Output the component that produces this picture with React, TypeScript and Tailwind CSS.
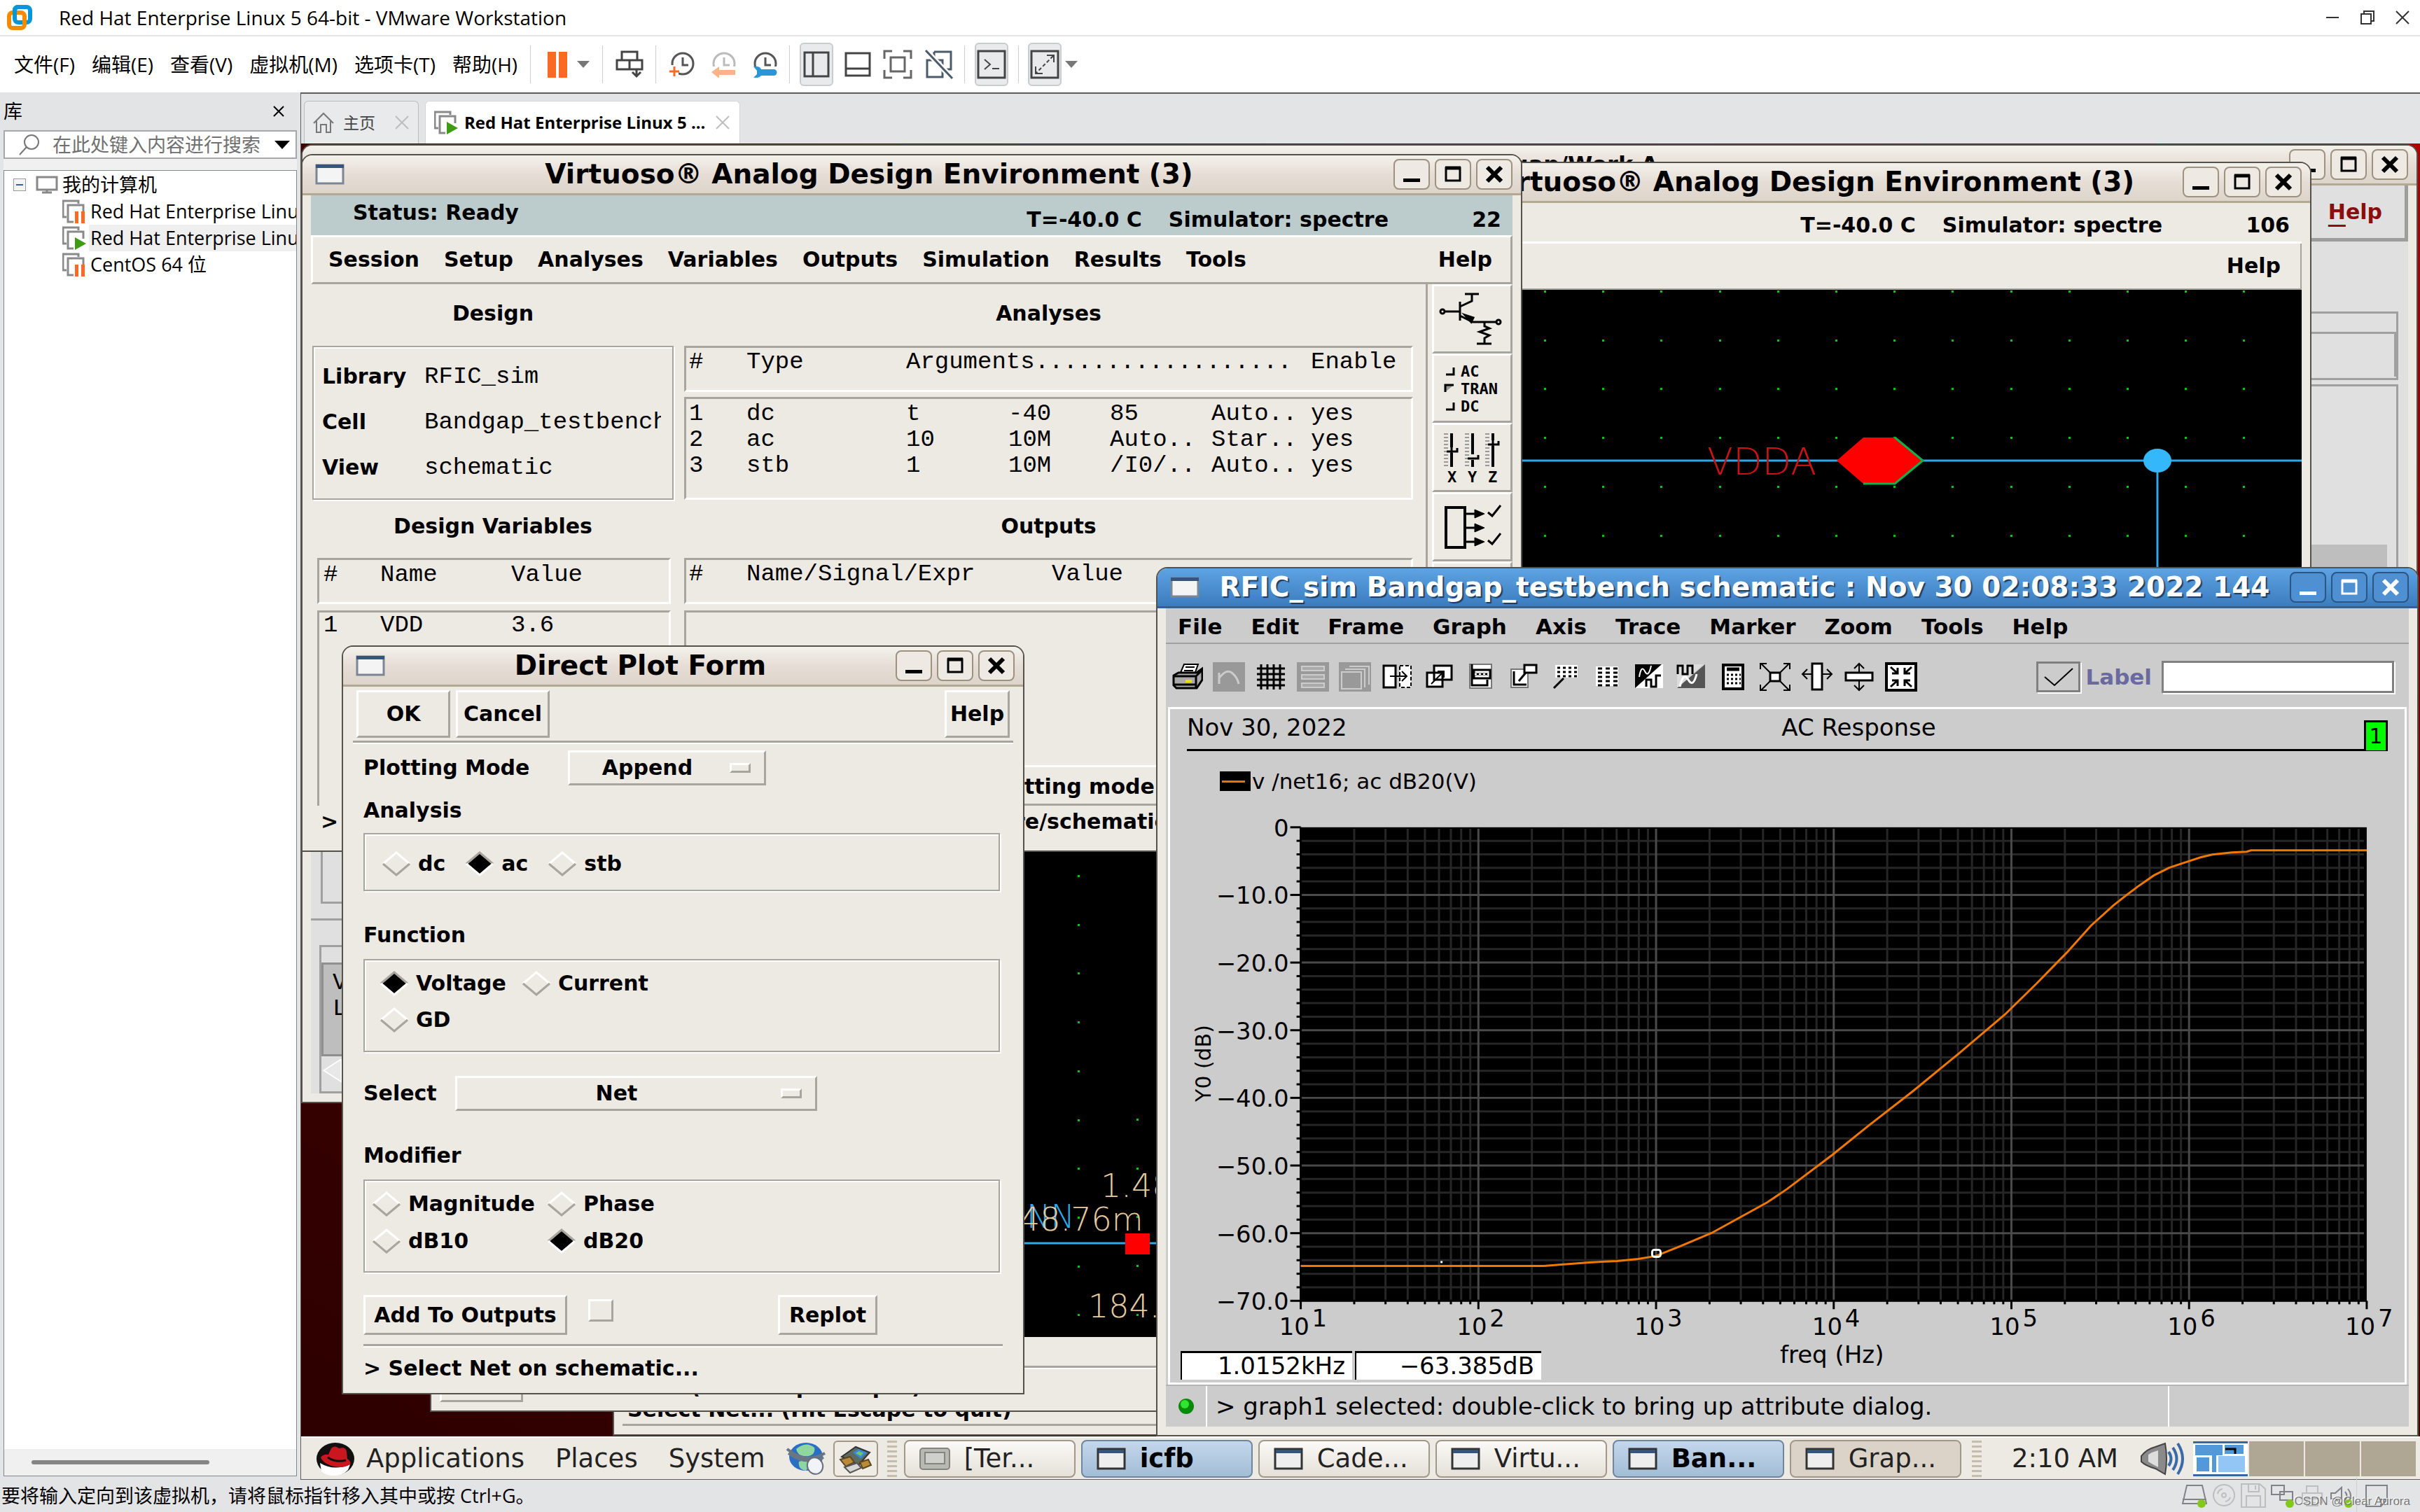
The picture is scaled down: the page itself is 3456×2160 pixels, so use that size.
import type { ReactNode } from "react";
import clsx from "clsx";

const UI = "font-['Open_Sans','Noto_Sans_CJK_SC',sans-serif]";
const BOLD = "font-['DejaVu_Sans',sans-serif] text-[30px] font-bold leading-9 text-black";
const MONO = "font-['Liberation_Mono',monospace] text-[34px] leading-[37px] text-black";
const SANS = "font-['DejaVu_Sans',sans-serif] text-[34px] leading-10 text-black";

const RAISED = "border-[3px] border-t-white border-l-white border-r-[#a8a59f] border-b-[#a8a59f]";
const SUNKEN = "border-[3px] border-t-[#a8a59f] border-l-[#a8a59f] border-r-white border-b-white";
const GROOVE = "border-2 border-[#a8a59f] shadow-[inset_2px_2px_0_#fff,2px_2px_0_#fff]";

/* ---------- VMware shell ---------- */

function VmwareLogo() {
  return (
    <svg width="38" height="38" viewBox="0 0 38 38" fill="none" strokeWidth="6">
      <rect x="12" y="4" width="22" height="22" rx="5" stroke="#0a95d6" />
      <rect x="4" y="12" width="22" height="22" rx="5" stroke="#f38b00" />
      <path d="M12 16V9q0-5 5-5h6" stroke="#0a95d6" />
    </svg>
  );
}

function TitleBar() {
  return (
    <header className="flex h-[52px] shrink-0 items-center border-b-2 border-[#e4e4e4] bg-white pl-[9px]">
      <VmwareLogo />
      <h1 className="ml-[37px] flex-1 text-[28px] text-black">Red Hat Enterprise Linux 5 64-bit - VMware Workstation</h1>
      <div className="flex gap-[28px] pr-[14px]">
        <button aria-label="最小化">
          <svg width="22" height="22" viewBox="0 0 22 22" stroke="#333" strokeWidth="2"><path d="M2 11h18" /></svg>
        </button>
        <button aria-label="还原">
          <svg width="22" height="22" viewBox="0 0 22 22" fill="none" stroke="#333" strokeWidth="2">
            <path d="M6 6V2h14v14h-4M2 6h14v14H2z" />
          </svg>
        </button>
        <button aria-label="关闭">
          <svg width="22" height="22" viewBox="0 0 22 22" stroke="#333" strokeWidth="2"><path d="M2 2l18 18M20 2L2 20" /></svg>
        </button>
      </div>
    </header>
  );
}

function Clock({ color, children }: { color: string; children: ReactNode }) {
  return (
    <svg width="38" height="38" viewBox="0 0 38 38" fill="none">
      <circle cx="20" cy="18" r="15" stroke={color} strokeWidth="3" />
      <path d="M20 9v11h8" stroke={color} strokeWidth="3" />
      {children}
    </svg>
  );
}

const Sep = ({ className }: { className?: string }) => <span className={clsx("h-[54px] w-px bg-[#cfcfcf]", className)} />;

const Caret = ({ className }: { className?: string }) => (
  <svg width="18" height="10" viewBox="0 0 18 10" className={className} fill="#777"><path d="M0 0h18L9 10z" /></svg>
);

const vmMenus = ["文件(F)", "编辑(E)", "查看(V)", "虚拟机(M)", "选项卡(T)", "帮助(H)"];

const pressed = "flex h-[62px] w-[48px] items-center justify-center rounded-md border-2 border-[#c9cbcc] bg-[#e9eaeb]";

function MenuBar() {
  return (
    <div className="flex h-[80px] shrink-0 items-center bg-white pl-[20px]">
      <nav className="flex gap-[24px] text-[28px] text-black">
        {vmMenus.map((m) => (
          <button key={m}>{m}</button>
        ))}
      </nav>
      <Sep className="ml-[18px]" />
      <button aria-label="挂起" className="ml-[24px] flex gap-1">
        <i className="h-[37px] w-[12px] bg-[#fb6a22]" />
        <i className="h-[37px] w-[12px] bg-[#fb6a22]" />
      </button>
      <Caret className="ml-[14px]" />
      <Sep className="ml-[18px]" />
      <button aria-label="发送 Ctrl+Alt+Del" className="ml-[18px]">
        <svg width="40" height="40" viewBox="0 0 40 40" fill="none" stroke="#444" strokeWidth="3">
          <path d="M9 13V2h22v11M2 14h36v13H2zM20 14v13M30 27v9M24 31l6 6 6-6" />
        </svg>
      </button>
      <Sep className="ml-[17px]" />
      <div className="ml-[18px] flex gap-[21px]">
        <button aria-label="拍摄快照">
          <Clock color="#555"><path d="M0 20h14v16H0z" fill="#fff" /><path d="M8 22v14M1 29h14" stroke="#fb6a22" strokeWidth="3" /></Clock>
        </button>
        <button aria-label="恢复快照">
          <Clock color="#bbb"><path d="M0 22h38v16H0z" fill="#fff" /><path d="M2 30l11-8v5h23v7H13v5z" fill="#fcb28a" /></Clock>
        </button>
        <button aria-label="管理快照">
          <Clock color="#555">
            <path d="M0 22h38v16H0z" fill="#fff" />
            <path d="M3 22q9-1 11 4h18a4 4 0 0 1 0 9H14q-3 4-11 3l5-5v-5z" fill="#2b95d8" />
          </Clock>
        </button>
      </div>
      <Sep className="ml-[16px]" />
      <button aria-label="显示库" className={clsx(pressed, "ml-[14px]")}>
        <svg width="38" height="38" viewBox="0 0 38 38" fill="none" stroke="#444" strokeWidth="3"><path d="M2 2h34v34H2zM14 2v34" /></svg>
      </button>
      <div className="ml-[16px] flex items-center gap-[17px]">
        <button aria-label="缩略图栏">
          <svg width="38" height="38" viewBox="0 0 38 38" fill="none" stroke="#444" strokeWidth="3"><path d="M2 3h34v32H2zM2 25h34" /></svg>
        </button>
        <button aria-label="全屏">
          <svg width="42" height="42" viewBox="0 0 42 42" fill="none" stroke="#666" strokeWidth="3">
            <path d="M2 13V2h11M29 2h11v11M40 29v11H29M13 40H2V29M11 11h20v20H11z" />
          </svg>
        </button>
        <button aria-label="Unity">
          <svg width="42" height="42" viewBox="0 0 42 42" fill="none" stroke="#4a5b6b" strokeWidth="3">
            <path d="M14 3h24v25h-7M14 3v10M4 15h22v24H4z" />
            <path d="M2 1l38 40" stroke="#fff" strokeWidth="8" />
            <path d="M2 1l38 40" />
          </svg>
        </button>
      </div>
      <Sep className="ml-[15px]" />
      <button aria-label="控制台" className={clsx(pressed, "ml-[14px]")}>
        <svg width="42" height="42" viewBox="0 0 42 42" fill="none" stroke="#444" strokeWidth="3"><path d="M2 2h38v38H2z" /><path d="M11 14l8 7-8 7M22 27h10" strokeWidth="2" /></svg>
      </button>
      <Sep className="ml-[14px]" />
      <button aria-label="拉伸" className={clsx(pressed, "ml-[13px]")}>
        <svg width="42" height="42" viewBox="0 0 42 42" fill="none" stroke="#444" strokeWidth="3">
          <path d="M2 2h38v38H2z" />
          <path d="M24 8h10v10M8 24v10h10" strokeWidth="2" />
          <path d="M33 9L9 33" strokeWidth="2" strokeDasharray="5 3" />
        </svg>
      </button>
      <Caret className="ml-[5px]" />
    </div>
  );
}

function VmIcon({ state }: { state: "paused" | "running" }) {
  return (
    <svg width="34" height="34" viewBox="0 0 34 34" fill="none" className="shrink-0">
      <path d="M6 25H1V2h22v4" stroke="#8a8a8a" strokeWidth="3" />
      <path d="M16 32H8V8h22v10" stroke="#8a8a8a" strokeWidth="3" />
      {state === "paused" ? (
        <path d="M18 17h5v17h-5zM27 17h5v17h-5z" fill="#fb6a22" />
      ) : (
        <path d="M18 16l16 9-16 9z" fill="#3f9c12" />
      )}
    </svg>
  );
}

const machines = [
  { name: "Red Hat Enterprise Linux 5 64-bit", state: "paused" as const, selected: false },
  { name: "Red Hat Enterprise Linux 5 64-bit", state: "running" as const, selected: true },
  { name: "CentOS 64 位", state: "paused" as const, selected: false },
];

function Library() {
  return (
    <aside className="flex w-[429px] shrink-0 flex-col pr-[5px] pb-[5px] pl-[5px] text-[27px] text-black">
      <div className="flex h-[54px] items-center justify-between pr-[18px]">
        <h2>库</h2>
        <button aria-label="关闭库">
          <svg width="16" height="16" viewBox="0 0 16 16" stroke="#000" strokeWidth="2"><path d="M1 1l14 14M15 1L1 15" /></svg>
        </button>
      </div>
      <div className="flex h-[41px] items-center border-2 border-[#a5a7aa] bg-white pr-[8px] pl-[20px]">
        <svg width="30" height="30" viewBox="0 0 30 30" fill="none" stroke="#777" strokeWidth="2"><circle cx="18" cy="11" r="10" /><path d="M11 18L1 29" /></svg>
        <input
          aria-label="搜索"
          placeholder="在此处键入内容进行搜索"
          className="ml-[18px] min-w-0 flex-1 leading-9 outline-none placeholder:text-[#707070]"
        />
        <svg width="22" height="12" viewBox="0 0 22 12"><path d="M0 0h22L11 12z" /></svg>
      </div>
      <div className="h-[16px] bg-[#f0f0f0]" />
      <div className="flex flex-1 flex-col border border-[#828790] bg-white">
        <ul className="flex-1 overflow-hidden pt-px whitespace-nowrap">
          <li className="flex h-[38px] items-center pl-[13px]">
            <span className="flex h-[18px] w-[18px] items-center justify-center border border-[#999] bg-[#f4f4f4]"><i className="h-[2px] w-[10px] bg-[#3a5fb0]" /></span>
            <svg width="32" height="26" viewBox="0 0 32 26" className="mr-[6px] ml-[14px]" fill="none" stroke="#888" strokeWidth="3"><path d="M2 2h28v18H2zM16 20v4M9 24h14" /></svg>
            我的计算机
          </li>
          {machines.map((m, i) => (
            <li key={i} className="flex h-[38px] items-center pl-[83px]">
              <VmIcon state={m.state} />
              <span className={clsx("ml-[4px] flex-1 pl-[2px] leading-[38px]", m.selected && "bg-[#efefef]")}>{m.name}</span>
            </li>
          ))}
        </ul>
        <div className="flex h-[38px] items-center bg-[#f0f0f0] pl-[39px]">
          <i className="h-[6px] w-[254px] rounded-sm bg-[#858585]" />
        </div>
      </div>
    </aside>
  );
}

const TabClose = () => (
  <button aria-label="关闭标签">
    <svg width="22" height="22" viewBox="0 0 22 22" stroke="#bdbdbd" strokeWidth="2"><path d="M2 2l18 18M20 2L2 20" /></svg>
  </button>
);

function Tabs() {
  return (
    <div className="flex h-[73px] items-end gap-[9px] border-t-2 border-[#5c5c5c] pl-[4px]">
      <div className="flex h-[61px] w-[164px] items-center rounded-t-md border border-b-0 border-[#b9bbbd] bg-[#e9eaeb] pr-[12px] pl-[12px]">
        <svg width="30" height="30" viewBox="0 0 30 30" fill="none" stroke="#777" strokeWidth="2"><path d="M1 16L15 2l14 14M5 13v16h6V18h8v11h6V13" /></svg>
        <span className="ml-[13px] flex-1 text-[23px] text-[#444]">主页</span>
        <TabClose />
      </div>
      <div className="flex h-[61px] w-[450px] items-center rounded-t-md border border-b-0 border-[#d6d6d6] bg-white pr-[13px] pl-[12px]">
        <VmIcon state="running" />
        <span className="ml-[9px] flex-1 text-[24px] font-bold whitespace-nowrap text-black">Red Hat Enterprise Linux 5 ...</span>
        <TabClose />
      </div>
    </div>
  );
}

const tray = [
  { label: "硬盘", live: true, color: "#808285", d: "M7 3h22l6 26H1zM1 23h34" },
  { label: "光驱", live: false, color: "#bcbec0", d: "M18 2a15 15 0 1 0 .1 0zM18 14a3 3 0 1 0 .1 0zM9 15a9 9 0 0 1 7-7M27 20a9 9 0 0 1-7 6" },
  { label: "软盘", live: false, color: "#bcbec0", d: "M1 1h26l8 7v26H1zM11 1v11h15V1M21 3v6M8 34V18h20v16" },
  { label: "网络", live: true, color: "#808285", d: "M2 3h18v13H2zM14 12h18v12H14z" },
  { label: "打印机", live: false, color: "#bcbec0", d: "M10 14V4h16v10M4 14h28v14H4zM10 22h16v10H10z" },
  { label: "声卡", live: true, color: "#808285", d: "M3 14h6l9-8v24l-9-8H3zM23 12q5 6 0 12M27 8q8 10 0 19" },
];

function StatusBar() {
  return (
    <footer className="relative flex h-[46px] shrink-0 items-center pl-[2px] text-[27px] text-black">
      <span className="flex-1">要将输入定向到该虚拟机，请将鼠标指针移入其中或按 Ctrl+G。</span>
      <div className="flex items-center gap-[6px]">
        {tray.map((t) => (
          <svg key={t.label} width="36" height="36" viewBox="0 0 36 36" fill="none" stroke={t.color} strokeWidth="2" role="img" aria-label={t.label}>
            <path d={t.d} />
            {t.live && <circle cx="28" cy="29" r="6" fill="#84c81c" stroke="none" />}
          </svg>
        ))}
      </div>
      <Sep className="ml-[3px] h-[40px]" />
      <svg width="34" height="34" viewBox="0 0 34 34" fill="none" stroke="#808285" strokeWidth="2" className="mr-[45px] ml-[11px]"><path d="M2 2h30v20l-9 10H2zM32 22h-9v10" /></svg>
      <span className="absolute right-[14px] bottom-[3px] font-['Liberation_Sans',sans-serif] text-[17px] leading-6 text-[#777] [text-shadow:-1px_-1px_0_#fff]">CSDN @Clear Aurora</span>
    </footer>
  );
}

/* ---------- Linux desktop ---------- */

function WindowButtons({ active }: { active?: boolean }) {
  const cls = clsx(
    "flex h-[44px] w-[52px] items-center justify-center rounded-lg border-2",
    active ? "border-[#2b5583] bg-[#4f90d2] text-white" : "border-[#9d9280] bg-[#eee9e3] text-black",
  );
  return (
    <div className="flex gap-[7px]">
      <button aria-label="Minimize" className={cls}>
        <svg width="26" height="26" viewBox="0 0 26 26" fill="currentColor"><path d="M1 19h24v5H1z" /></svg>
      </button>
      <button aria-label="Maximize" className={cls}>
        <svg width="26" height="26" viewBox="0 0 26 26" fill="none" stroke="currentColor" strokeWidth="3"><path d="M3 4h20v18H3z" /><path d="M2 4h22" strokeWidth="5" /></svg>
      </button>
      <button aria-label="Close" className={cls}>
        <svg width="26" height="26" viewBox="0 0 26 26" stroke="currentColor" strokeWidth="6"><path d="M3 3l20 20M23 3L3 23" /></svg>
      </button>
    </div>
  );
}

type WindowProps = { title: string; place: string; active?: boolean; body?: string; titleSize?: string; children?: ReactNode };

function Window({ title, place, active, body, titleSize = "text-[39px]", children }: WindowProps) {
  return (
    <section className={clsx("absolute flex flex-col overflow-hidden rounded-t-[16px] border-2 border-[#55524b] bg-[#edeae3]", place)}>
      <div
        className={clsx(
          "flex h-[57px] shrink-0 items-center border-b-[3px] pr-[12px] pl-[18px]",
          active
            ? "border-[#2f6194] bg-linear-to-b from-[#5ea3e3] to-[#3b7cbd]"
            : "border-[#b3a894] bg-linear-to-b from-[#f4f1ec] via-[#e6ded6] to-[#ddd5ca]",
        )}
      >
        <svg width="42" height="30" viewBox="0 0 42 30"><path d="M2 2h38v26H2z" fill="#f4f4f4" stroke="#7c8694" strokeWidth="3" /><path d="M1 1h40v5H1z" fill="#35557d" /></svg>
        <h2
          className={clsx(
            "flex-1 text-center font-['DejaVu_Sans',sans-serif] leading-[48px] font-bold whitespace-nowrap",
            titleSize,
            active ? "text-white [text-shadow:2px_2px_1px_#1c3b5e]" : "text-black",
          )}
        >
          {title}
        </h2>
        <WindowButtons active={active} />
      </div>
      <div className={clsx("mx-[12px] mb-[12px] flex min-h-0 flex-1 flex-col", body)}>{children}</div>
    </section>
  );
}

function LogWindow() {
  return (
    <Window
      title="icfb - Log: /home/rfic/projects/analog/bandgap/Work A"
      titleSize="text-[32px]"
      place="top-px right-[3px] left-0 h-[1370px]"
      body="bg-[#e0e0e0]"
    >
      <div className="flex h-[80px] shrink-0 items-center justify-end border-r-[5px] border-b-[5px] border-[#9d9d9d] pr-[32px]">
        <button className="font-['DejaVu_Sans',sans-serif] text-[30px] font-bold text-[#8b0d0d]"><u className="underline-offset-8">H</u>elp</button>
      </div>
      <div className="mx-[14px] mt-[100px] h-[98px] shrink-0 border-[3px] border-[#a0a0a0] pt-[26px]">
        <div className="h-[64px] border-t-[3px] border-r-[3px] border-[#a0a0a0]" />
      </div>
      <div className="mx-[14px] mt-[6px] h-[742px] shrink-0 border-[3px] border-[#a0a0a0] px-[13px] pt-[226px] pb-[100px]">
        <div className="h-full bg-[#bebebe]" />
      </div>
      <div className="mt-[21px] h-[3px] shrink-0 bg-[#a0a0a0]" />
      <div className="mx-[12px] mt-[35px] flex flex-1 flex-col border-[3px] border-[#a0a0a0] pt-[22px]">
        <div className={clsx(MONO, "h-[134px] shrink-0 border-[3px] border-[#8f8f8f] bg-[#bebebe] pt-[8px] pl-[13px]")}>
          <p>Virtuoso</p>
          <p>Loading</p>
        </div>
        <svg width="30" height="36" viewBox="0 0 30 40" className="mt-[4px]"><path d="M30 0L2 18l28 18z" fill="#e8e8e8" stroke="#fff" strokeWidth="2" /></svg>
      </div>
    </Window>
  );
}

function BehindWindow() {
  return (
    <Window title="Virtuoso® Schematic Editing" place="left-[445px] top-[1200px] h-[646px] w-[1000px]">
      <div className="flex-1" />
      <div className={clsx(BOLD, "border-b-[3px] border-[#a8a59f] pb-[2px] pl-[7px]")}>Select Net... (Hit Escape to quit)</div>
    </Window>
  );
}

const range = (n: number) => Array.from({ length: n }, (_, i) => i);

function Dots({ x, y, cols, rows }: { x: number; y: number; cols: number; rows: number }) {
  return (
    <g fill="#00c814">
      {range(rows).map((r) => range(cols).map((c) => <rect key={`${r}-${c}`} x={x + Math.round(c * 83.2)} y={y + Math.round(r * 69.7)} width="3" height="3" />))}
    </g>
  );
}

function TestbenchWindow() {
  return (
    <Window title="Virtuoso® Schematic Editing" place="left-[184px] top-[600px] h-[1212px] w-[1400px]">
      <svg width="100%" className="min-h-0 flex-1 bg-black font-['DejaVu_Sans',sans-serif] font-extralight" fontSize="46">
        <Dots x={911} y={386} cols={1} rows={10} />
        <Dots x={995} y={734} cols={1} rows={5} />
        <path d="M0 912h1300" stroke="#2ea8e6" strokeWidth="3" />
        <text x="838" y="890" fill="#2ea8e6">NN</text>
        <text x="944" y="846" fill="#e3cba0">1.484</text>
        <text x="828" y="894" fill="#e3cba0">48.76m</text>
        <text x="926" y="1018" fill="#e3cba0">184.2</text>
        <path d="M979 898h35v30h-35z" fill="red" />
      </svg>
      <div className="h-[44px] shrink-0 border-b-[3px] border-[#a8a59f] shadow-[0_2px_0_#fff]" />
      <div className="flex h-[49px] shrink-0 items-end gap-[20px]">
        <span className={clsx(RAISED, "h-[46px] w-[119px]")} />
        <span className={clsx(BOLD, "mb-1")}>Select Net... (Hit Escape to quit)</span>
      </div>
    </Window>
  );
}

function SchematicWindow() {
  return (
    <Window title="Virtuoso® Analog Design Environment (3)" place="top-[26px] right-[155px] left-[1562px] h-[1000px]">
      <div className={clsx(BOLD, "flex h-[58px] shrink-0 items-center justify-end border-b-[3px] border-white pt-2 pr-[17px] whitespace-nowrap")}>
        <span>T=-40.0 C</span>
        <span className="ml-[38px]">Simulator: spectre</span>
        <span className="w-[182px] text-right">106</span>
      </div>
      <div className={clsx(BOLD, "flex h-[66px] shrink-0 items-center justify-end border-r-2 border-b-2 border-[#a8a59f] pr-[28px]")}>
        <button>Help</button>
      </div>
      <svg width="100%" className="min-h-0 flex-1 bg-black" fill="none">
        <Dots x={199} y={1} cols={13} rows={6} />
        <path d="M0 244h1290M1075 244v400" stroke="#2ea8e6" strokeWidth="3" />
        <path d="M617 244l38-33h45l40 33-40 33h-45z" fill="red" />
        <path d="M700 211l40 33-40 33h-45" stroke="#12b04a" strokeWidth="3" />
        <ellipse cx="1075" cy="244" rx="20" ry="17" fill="#35b7fb" />
        <text x="432" y="264" fill="#c81414" fontSize="54" className="font-['DejaVu_Sans',sans-serif] font-extralight">VDDA</text>
      </svg>
    </Window>
  );
}

const adeMenus = ["Session", "Setup", "Analyses", "Variables", "Outputs", "Simulation", "Results", "Tools"];

const analyses = [
  ["1", "dc", "t", "-40", "85", "Auto..", "yes"],
  ["2", "ac", "10", "10M", "Auto..", "Star..", "yes"],
  ["3", "stb", "1", "10M", "/I0/..", "Auto..", "yes"],
];

const AnalysisCols = () => (
  <colgroup>
    <col className="w-[82px]" />
    <col className="w-[228px]" />
    <col className="w-[146px]" />
    <col className="w-[145px]" />
    <col className="w-[145px]" />
    <col className="w-[142px]" />
    <col />
  </colgroup>
);

const adeTools = [
  {
    label: "Choose Design",
    icon: (
      <g fill="none" stroke="#000" strokeWidth="3">
        <circle cx="12" cy="36" r="3" />
        <path d="M15 36h22M37 22v27M37 29l17-8V11M44 11h20M37 42l18 9h34M72 51v6l7 3-14 5 14 5-7 4v8M61 82h21" />
        <path d="M44 41l9 10 3-6z" fill="#000" />
        <circle cx="92" cy="51" r="3" />
      </g>
    ),
  },
  {
    label: "Choose Analyses",
    icon: (
      <g>
        <path d="M17 27h11V17M17 77h11V67" fill="none" stroke="#000" strokeWidth="3" />
        <path d="M16 52V42h12" fill="#999" stroke="#000" strokeWidth="3" />
        <g className="font-['DejaVu_Sans_Mono',monospace] font-bold" fontSize="22">
          <text x="38" y="30">AC</text>
          <text x="38" y="55">TRAN</text>
          <text x="38" y="80">DC</text>
        </g>
      </g>
    ),
  },
  {
    label: "Edit Variables",
    icon: (
      <g>
        <path d="M17 12v48M47 12v48M76 12v48" stroke="#999" strokeWidth="6" strokeDasharray="2 3" />
        <path d="M25 12v20M25 40v20M55 12v30M55 50v10M84 12v10M84 30v30" stroke="#000" strokeWidth="4" />
        <path d="M18 38h15v-5M48 48h15v-5M77 28h15v-5M25 32v28M84 22v20" fill="none" stroke="#000" strokeWidth="3" />
        <g className="font-['DejaVu_Sans_Mono',monospace] font-bold" fontSize="22">
          <text x="19" y="82">X</text>
          <text x="48" y="82">Y</text>
          <text x="77" y="82">Z</text>
        </g>
      </g>
    ),
  },
  {
    label: "Setup Outputs",
    icon: (
      <g fill="none" stroke="#000" strokeWidth="4">
        <path d="M17 19h27v57H17z" />
        <path d="M44 28h15M44 48h15M44 68h15" strokeWidth="3" />
        <path d="M58 22l14 6-14 6zM58 42l14 6-14 6zM58 62l14 6-14 6z" fill="#000" strokeWidth="1" />
        <path d="M77 26l6 5 12-15M77 66l6 5 12-15" strokeWidth="3" />
      </g>
    ),
  },
  { label: "Delete", icon: null },
];

function AdeWindow() {
  return (
    <Window title="Virtuoso® Analog Design Environment (3)" place="top-[15px] left-0 h-[997px] w-[1744px]">
      <div className={clsx(BOLD, "flex h-[57px] shrink-0 items-center bg-[#bccccc] pr-[16px] pl-[60px]")}>
        <span className="flex-1 pb-2">Status: Ready</span>
        <span className="pt-3">T=-40.0 C</span>
        <span className="ml-[38px] pt-3">Simulator: spectre</span>
        <span className="w-[161px] pt-3 text-right">22</span>
      </div>
      <nav className={clsx(BOLD, RAISED, "flex h-[70px] shrink-0 items-center gap-[35px] pr-[26px] pl-[22px]")}>
        {adeMenus.map((m) => (
          <button key={m}>{m}</button>
        ))}
        <button className="ml-auto">Help</button>
      </nav>
      <div className="flex">
        <div className="flex flex-1 gap-[15px] border-r-[3px] border-[#a8a59f] pr-[18px] pl-[2px]">
          <div className="w-[516px]">
            <h3 className={clsx(BOLD, "h-[88px] pt-6 text-center")}>Design</h3>
            <dl className={clsx(GROOVE, "grid h-[220px] grid-cols-[146px_1fr] content-start gap-y-[29px] overflow-hidden pt-[24px] pl-[12px]")}>
              {[
                ["Library", "RFIC_sim"],
                ["Cell", "Bandgap_testbench"],
                ["View", "schematic"],
              ].map(([k, v]) => (
                <div key={k} className="contents">
                  <dt className={BOLD}>{k}</dt>
                  <dd className={clsx(MONO, "mr-4 h-9 overflow-hidden")}>{v}</dd>
                </div>
              ))}
            </dl>
            <h3 className={clsx(BOLD, "h-[83px] pt-[20px] text-center")}>Design Variables</h3>
            <div className="pr-[4px] pl-[7px]">
              <table className={clsx(MONO, "w-full table-fixed border-separate border-spacing-0 text-left")}>
                <colgroup>
                  <col className="w-[90px]" />
                  <col className="w-[187px]" />
                  <col />
                </colgroup>
                <thead className="[&_th]:h-[66px] [&_th]:border-t-[3px] [&_th]:border-b-[3px] [&_th]:border-t-[#a8a59f] [&_th]:border-b-white [&_th]:pb-[18px] [&_th]:font-normal">
                  <tr>
                    <th className="border-l-[3px] border-l-[#a8a59f] pl-[6px]">#</th>
                    <th>Name</th>
                    <th className="border-r-[3px] border-r-white">Value</th>
                  </tr>
                </thead>
                <tbody className="[&_td]:border-t-[3px] [&_td]:border-t-[#a8a59f]">
                  <tr className="h-[9px]"><td colSpan={3} className="h-[9px] border-t-0! p-0" /></tr>
                  <tr className="h-[279px] align-top">
                    <td className="border-l-[3px] border-l-[#a8a59f] pl-[6px]">1</td>
                    <td>VDD</td>
                    <td className="border-r-[3px] border-r-white">3.6</td>
                  </tr>
                </tbody>
              </table>
            </div>
          </div>
          <div className="flex-1">
            <h3 className={clsx(BOLD, "h-[88px] pt-6 text-center")}>Analyses</h3>
            <div className={clsx(SUNKEN, "h-[66px] overflow-hidden pt-[2px] pl-[4px]")}>
              <table className={clsx(MONO, "w-full table-fixed text-left")}>
                <AnalysisCols />
                <thead>
                  <tr className="[&_th]:font-normal">
                    <th>#</th>
                    <th>Type</th>
                    <th colSpan={4}>Arguments..................</th>
                    <th>Enable</th>
                  </tr>
                </thead>
              </table>
            </div>
            <div className={clsx(SUNKEN, "mt-[7px] h-[147px] pt-[3px] pl-[4px]")}>
              <table className={clsx(MONO, "w-full table-fixed")}>
                <AnalysisCols />
                <tbody>
                  {analyses.map((row) => (
                    <tr key={row[0]}>
                      {row.map((cell, i) => (
                        <td key={i}>{cell}</td>
                      ))}
                    </tr>
                  ))}
                </tbody>
              </table>
            </div>
            <h3 className={clsx(BOLD, "h-[83px] pt-[20px] text-center")}>Outputs</h3>
            <div className={clsx(SUNKEN, "h-[66px] overflow-hidden pt-[2px] pl-[4px]")}>
              <table className={clsx(MONO, "w-full table-fixed text-left")}>
                <thead>
                  <tr className="[&_th]:font-normal">
                    <th className="w-[82px]">#</th>
                    <th className="w-[436px]">Name/Signal/Expr</th>
                    <th>Value</th>
                  </tr>
                </thead>
              </table>
            </div>
            <div className={clsx(SUNKEN, "mt-[9px] h-[224px]")} />
            <p className={clsx(BOLD, "h-[55px] border-b-[3px] border-[#a8a59f] pt-[10px] pl-[433px]")}>Plotting mode:</p>
          </div>
        </div>
        <div className="w-[121px] pl-[6px]">
          {adeTools.map((t) => (
            <button key={t.label} aria-label={t.label} className={clsx(RAISED, "block h-[99px] w-[115px]")}>
              <svg width="109" height="93" viewBox="0 0 109 93">{t.icon}</svg>
            </button>
          ))}
        </div>
      </div>
      <p className={clsx(BOLD, "flex pt-[5px] pl-[14px] whitespace-nowrap")}>
        <span>&gt;</span>
        <span className="w-[1001px] shrink-0 text-right">Results in /home/rfic/simulation/spectre</span>
        <span>/schematic</span>
      </p>
    </Window>
  );
}

function Diamond({ name, label, checked }: { name: string; label: string; checked?: boolean }) {
  return (
    <label className="flex h-9 items-center gap-[10px]">
      <span className="grid">
        <input type="radio" name={name} defaultChecked={checked} className="[grid-area:1/1] h-9 w-[42px] appearance-none" />
        <svg width="42" height="36" viewBox="0 0 42 36" className="pointer-events-none [grid-area:1/1]" fill="none" strokeWidth="3">
          {checked && <path d="M21 3l17 15-17 15L4 18z" fill="#000" />}
          <path d="M2 18L21 2l19 16" stroke={checked ? "#a8a59f" : "#fff"} />
          <path d="M2 18l19 16 19-16" stroke={checked ? "#fff" : "#a8a59f"} />
        </svg>
      </span>
      {label}
    </label>
  );
}

function OptionMenu({ id, value, size }: { id: string; value: string; size: string }) {
  return (
    <span className={clsx("grid items-center", size)}>
      <select id={id} className={clsx(RAISED, "[grid-area:1/1] h-[50px] w-full appearance-none pr-14 text-center")} defaultValue={value}>
        <option>{value}</option>
      </select>
      <i className={clsx(RAISED, "pointer-events-none [grid-area:1/1] mr-[22px] h-[14px] w-[30px] justify-self-end")} />
    </span>
  );
}

function DirectPlotForm() {
  return (
    <Window title="Direct Plot Form" place="top-[717px] left-[58px] h-[1070px] w-[975px]">
      <form className={clsx(BOLD, "flex flex-1 flex-col")} onSubmit={(e) => e.preventDefault()}>
        <div className="mx-[2px] flex h-[80px] items-center gap-[8px] border-b-[3px] border-[#a8a59f] px-[5px] shadow-[0_2px_0_#fff]">
          <button className={clsx(RAISED, "h-[68px] w-[134px]")}>OK</button>
          <button className={clsx(RAISED, "h-[68px] w-[134px]")}>Cancel</button>
          <button className={clsx(RAISED, "ml-auto h-[68px] w-[93px]")}>Help</button>
        </div>
        <div className="flex flex-1 flex-col px-[17px]">
          <div className="mt-[11px] flex items-center">
            <label htmlFor="mode" className="w-[292px]">Plotting Mode</label>
            <OptionMenu id="mode" value="Append" size="w-[283px]" />
          </div>
          <h3 className="mt-[18px]">Analysis</h3>
          <div className={clsx(GROOVE, "mt-[14px] mr-[4px] flex h-[83px] items-center gap-[28px] px-[24px] pt-1")}>
            <Diamond name="analysis" label="dc" />
            <Diamond name="analysis" label="ac" checked />
            <Diamond name="analysis" label="stb" />
          </div>
          <h3 className="mt-[45px]">Function</h3>
          <div className={clsx(GROOVE, "mt-[16px] mr-[4px] flex h-[133px] flex-col gap-[16px] px-[21px] pt-[15px]")}>
            <div className="flex gap-[22px]">
              <Diamond name="function" label="Voltage" checked />
              <Diamond name="function" label="Current" />
            </div>
            <Diamond name="function" label="GD" />
          </div>
          <div className="mt-[34px] flex items-center">
            <label htmlFor="select" className="w-[131px]">Select</label>
            <OptionMenu id="select" value="Net" size="w-[517px]" />
          </div>
          <h3 className="mt-[46px]">Modifier</h3>
          <div className={clsx(GROOVE, "mt-[16px] mr-[4px] grid h-[133px] grid-cols-[250px_1fr] content-start gap-y-[17px] px-[10px] pt-[15px]")}>
            <Diamond name="modifier" label="Magnitude" />
            <Diamond name="modifier" label="Phase" />
            <Diamond name="modifier" label="dB10" />
            <Diamond name="modifier" label="dB20" checked />
          </div>
          <div className="mt-[32px] flex items-start">
            <button className={clsx(RAISED, "h-[57px] w-[291px] whitespace-nowrap")}>Add To Outputs</button>
            <input type="checkbox" aria-label="Add To Outputs" className={clsx(RAISED, "mt-[6px] ml-[30px] h-[32px] w-[36px] appearance-none")} />
            <button className={clsx(RAISED, "ml-[235px] h-[57px] w-[142px]")}>Replot</button>
          </div>
          <p className="mt-[13px] border-t-[3px] border-[#a8a59f] pt-[14px] shadow-[inset_0_2px_0_#fff]">&gt; Select Net on schematic...</p>
        </div>
      </form>
    </Window>
  );
}

/* ---------- waveform window ---------- */

const graphMenus = ["File", "Edit", "Frame", "Graph", "Axis", "Trace", "Marker", "Zoom", "Tools", "Help"];

const graphTools: { label: string; icon: ReactNode }[] = [
  {
    label: "Print",
    icon: (
      <>
        <path d="M12 16L18 2h20l-5 14z" fill="#fff" />
        <path d="M20 6h13M18 11h13" />
        <path d="M3 18l7-4h26l8-6v16l-8 12H7l-4-4z" fill="#aaa" strokeWidth="3" />
        <path d="M3 19h32v16M35 19l8-8M3 31h32" strokeWidth="3" />
        <path d="M20 26h9" stroke="#e8e000" strokeWidth="4" />
      </>
    ),
  },
  { label: "Undo", icon: <><path d="M-1-1h46v42H-1z" fill="#999" stroke="none" /><path d="M8 30V14M8 22Q18 8 26 14t10 16" stroke="#ccc" strokeWidth="3" /></> },
  { label: "Grid", icon: <path d="M8 2v36M17 2v36M26 2v36M35 2v36M2 8h40M2 16h40M2 24h40M2 32h40" strokeWidth="3" /> },
  { label: "Strips", icon: <><path d="M-1-1h46v42H-1z" fill="#999" stroke="none" /><path d="M6 5h32v6H6zM6 17h32v6H6zM6 29h32v6H6z" fill="#aaa" stroke="#ccc" /></> },
  { label: "Cards", icon: <><path d="M-1-1h46v42H-1z" fill="#999" stroke="none" /><path d="M14 5h28v26M8 9h28v26M3 13h28v24H3z" stroke="#ccc" /></> },
  {
    label: "Move",
    icon: (
      <>
        <path d="M3 4h17v31H3z" fill="#fff" strokeWidth="3" />
        <path d="M26 4h16v31H26z" fill="#fff" strokeDasharray="5 3" />
        <path d="M12 19h24M29 12l7 7-7 7" />
      </>
    ),
  },
  { label: "Copy", icon: <><path d="M15 4h25v20H15zM5 14h22v20H5z" fill="#fff" strokeWidth="3" /><path d="M11 30L29 12M20 12h9v9" /></> },
  { label: "Combine", icon: <><path d="M6 2h31v34H6z" fill="#fff" stroke="#777" /><path d="M9 2v30h22v-8M9 10h26v12H12V10M14 16h18" strokeWidth="3" /><path d="M13 16h20" stroke="#fff" strokeDasharray="3 3" /></> },
  { label: "Subwindow", icon: <><path d="M5 9h24v26H5z" fill="#fff" stroke="#777" /><path d="M9 12v19h18M16 26l10-12" strokeWidth="3" /><path d="M24 3h17v11H24z" fill="#fff" strokeWidth="3" /></> },
  { label: "Marker Table", icon: <><path d="M8 3h32v18H8z" fill="#fff" stroke="none" /><path d="M11 7h28M11 13h28M11 19h28" strokeDasharray="4 4" strokeWidth="3" /><path d="M6 36L20 22" strokeWidth="3" /></> },
  { label: "Table", icon: <><path d="M6 5h32v28H6z" fill="#fff" stroke="none" /><path d="M9 8h28M9 14h28M9 20h28M9 26h28M9 32h28" strokeDasharray="6 5" strokeWidth="3" /></> },
  {
    label: "Digital",
    icon: (
      <>
        <path d="M2 2h40v34H2z" fill="#fff" stroke="none" />
        <path d="M2 2h38L2 36z" fill="#000" stroke="none" />
        <path d="M8 20q3-18 8-8t9-8" stroke="#fff" />
        <path d="M18 34V24h7v10h7V18h7" strokeWidth="3" />
      </>
    ),
  },
  {
    label: "Analog",
    icon: (
      <>
        <path d="M2 2h38L2 36z" fill="#ddd" stroke="none" />
        <path d="M2 36L42 2v34z" fill="#555" stroke="none" />
        <path d="M3 16V4h7v12h7V4h7v12" strokeWidth="3" />
        <path d="M6 34q5-22 12-10t12-8" stroke="#fff" strokeWidth="3" />
      </>
    ),
  },
  { label: "Calculator", icon: <><path d="M8 3h28v34H8z" fill="#fff" strokeWidth="4" /><path d="M13 9h18" strokeWidth="5" /><path d="M13 17h20M13 23h20M13 29h20" strokeDasharray="3 3" strokeWidth="3" /></> },
  { label: "Fit", icon: <><path d="M15 14h14v12H15z" fill="#fff" strokeWidth="3" /><path d="M15 14L2 1M29 14L42 1M15 26L2 39M29 26l13 13M1 9V1h9M34 1h9v8M1 31v8h9M34 39h9v-8" /></> },
  { label: "X Zoom", icon: <><path d="M15 1h14v37H15z" fill="#fff" strokeWidth="3" /><path d="M15 16H1M8 9l-7 7 7 7M29 16h14M36 9l7 7-7 7" /></> },
  { label: "Y Zoom", icon: <><path d="M3 14h38v11H3z" fill="#fff" strokeWidth="3" /><path d="M22 14V1M15 8l7-7 7 7M22 25v14M15 32l7 7 7-7" /></> },
  { label: "Zoom Out", icon: <><path d="M1 1h42v38H1z" fill="#fff" strokeWidth="4" /><path d="M7 6l10 9M17 7v8H9M37 6l-10 9M27 7v8h8M7 34l10-9M17 33v-8H9M37 34l-10-9M27 33v-8h8" strokeWidth="3" /></> },
];

const X0 = 187;
const Y0 = 22;
const DECADE = 254.3;
const DB = 9.686;
const X1 = X0 + DECADE * 6;
const Y1 = Y0 + DB * 70;

const minorX = range(6).flatMap((d) => [2, 3, 4, 5, 6, 7, 8, 9].map((m) => X0 + DECADE * (d + Math.log10(m))));
const minorY = range(35).filter((i) => i % 5).map((i) => Y0 + DB * 2 * i);

const curve =
  "187,650 535,650 560,648 600,645 640,643 670,640 695,636 730,622 775,603 815,581 855,559 883,540 948,491 1000,449 1063,400 1130,345 1195,290 1240,246 1283,202 1318,163 1350,134 1369,119 1385,107 1408,91 1430,80 1457,71 1475,65 1492,61 1520,58 1541,57 1547,55 1713,55";

function Plot() {
  return (
    <svg viewBox="0 0 1767 762" className="h-[762px] w-full shrink-0 font-['DejaVu_Sans',sans-serif]" fontSize="34">
      <rect x={X0} y={Y0} width={X1 - X0} height={Y1 - Y0} fill="#000" />
      <g stroke="#262626" strokeWidth="3">
        {minorX.map((x) => <path key={x} d={`M${x} ${Y0 + 2}V${Y1}`} />)}
        {minorY.map((y) => <path key={y} d={`M${X0} ${y}H${X1 - 4}`} />)}
      </g>
      <g stroke="#4a4a4a" strokeWidth="3">
        {range(5).map((i) => <path key={i} d={`M${X0 + DECADE * (i + 1)} ${Y0 + 2}V${Y1}`} />)}
        {range(6).map((i) => <path key={i} d={`M${X0} ${Y0 + DB * 10 * (i + 1)}H${X1 - 4}`} />)}
      </g>
      <g stroke="#000" strokeWidth="3">
        <path d={`M${X0} ${Y0}V${Y1}H${X1}`} fill="none" />
        {minorX.map((x) => <path key={x} d={`M${x} ${Y1}v5`} />)}
        {minorY.map((y) => <path key={y} d={`M${X0 - 6} ${y}h6`} />)}
        {range(7).map((i) => <path key={i} d={`M${X0 + DECADE * i} ${Y1}v12`} />)}
        {range(8).map((i) => <path key={i} d={`M${X0 - 15} ${Y0 + DB * 10 * i}h15`} />)}
      </g>
      {range(8).map((i) => (
        <text key={i} x={X0 - 17} y={Y0 + DB * 10 * i + 13} textAnchor="end">{i === 0 ? "0" : `−${i}0.0`}</text>
      ))}
      {range(7).map((i) => (
        <g key={i}>
          <text x={X0 + DECADE * i - 31} y={Y1 + 49}>10</text>
          <text x={X0 + DECADE * i + 16} y={Y1 + 37}>{i + 1}</text>
        </g>
      ))}
      <text fontSize="30" textAnchor="middle" transform="translate(58 360) rotate(-90)">Y0 (dB)</text>
      <polyline points={curve} fill="none" stroke="#f07800" strokeWidth="3" />
      <rect x="387" y="643" width="3" height="3" fill="#fff" />
      <rect x="690" y="627" width="12" height="10" rx="3" fill="none" stroke="#fff" strokeWidth="3" />
    </svg>
  );
}

function GraphWindow() {
  return (
    <Window
      active
      title="RFIC_sim Bandgap_testbench schematic : Nov 30 02:08:33 2022 144"
      place="top-[605px] right-[2px] left-[1221px] h-[1242px]"
      body="bg-[#cccccc]"
    >
      <nav className={clsx(BOLD, "flex h-[51px] shrink-0 items-center gap-[41px] border-b-2 border-[#a0a0a0] pt-[2px] pl-[17px] text-[31px]!")}>
        {graphMenus.map((m) => (
          <button key={m}>{m}</button>
        ))}
      </nav>
      <div className="flex h-[90px] shrink-0 items-center pt-1 pr-[21px]">
        {graphTools.map((t) => (
          <button key={t.label} aria-label={t.label} className="flex w-[60px] shrink-0 justify-center">
            <svg width="46" height="42" viewBox="-1 -1 46 42" fill="none" stroke="#000" strokeWidth="2">{t.icon}</svg>
          </button>
        ))}
        <span className="ml-auto grid items-center justify-items-center">
          <input id="trace-label" type="checkbox" defaultChecked className="[grid-area:1/1] h-[44px] w-[63px] appearance-none border-[3px] border-[#808080] shadow-[2px_2px_0_#fff]" />
          <svg width="44" height="28" viewBox="0 0 44 28" className="pointer-events-none [grid-area:1/1]" fill="none" stroke="#000" strokeWidth="2"><path d="M2 14l14 12L42 2" /></svg>
        </span>
        <label htmlFor="trace-label" className="ml-[7px] font-['DejaVu_Sans',sans-serif] text-[31px] font-bold text-[#6a6a9f]">Label</label>
        <input aria-label="Label text" className="ml-[14px] h-[46px] w-[332px] border-[3px] border-[#808080] bg-white shadow-[2px_2px_0_#fff]" />
      </div>
      <div className="mx-[3px] flex flex-1 flex-col border-[3px] border-white">
        <div className={clsx(SANS, "mx-[24px] grid h-[60px] grid-cols-[1fr_auto_1fr] items-center border-b-[3px] border-black")}>
          <span className="pb-2">Nov 30, 2022</span>
          <span className="pb-2 pl-[204px]">AC Response</span>
          <span className="mt-4 w-[34px] justify-self-end border-[3px] border-b-0 border-black bg-[#00fa00] text-center text-[30px]">1</span>
        </div>
        <div className={clsx(SANS, "flex h-[86px] items-center pl-[71px] text-[31px]!")}>
          <span className="flex h-[28px] w-[44px] items-center bg-black pl-[3px]"><i className="h-[3px] w-[33px] bg-[#e67300]" /></span>
          <span className="ml-[2px]">v /net16; ac dB20(V)</span>
        </div>
        <Plot />
        <div className={clsx(SANS, "flex h-[54px] shrink-0 items-end pb-[4px] pl-[15px]")}>
          <output className="h-[41px] w-[245px] border-t-[3px] border-l-2 border-black bg-white pr-[10px] text-right leading-9">1.0152kHz</output>
          <output className="ml-[4px] h-[41px] w-[266px] border-t-[3px] border-l-2 border-black bg-white pr-[10px] text-right leading-9">−63.385dB</output>
          <span className="ml-[341px] self-start text-[34px] leading-7">freq (Hz)</span>
        </div>
      </div>
      <div className={clsx(SANS, "flex h-[60px] shrink-0 items-center border-t-2 border-[#b4b4b4]")}>
        <svg width="24" height="24" viewBox="0 0 24 24" className="ml-[17px]"><circle cx="12" cy="12" r="11" fill="#0a8a0a" /><circle cx="10" cy="9" r="6" fill="#2fe52f" /></svg>
        <span className="ml-[16px] flex flex-1 items-center self-stretch border-r-2 border-l-2 border-white pl-[12px]">&gt; graph1 selected: double-click to bring up attribute dialog.</span>
        <span className="w-[342px]" />
      </div>
    </Window>
  );
}

/* ---------- GNOME panel ---------- */

const tasks = [
  { label: "[Ter...", look: "plain", icon: "term" },
  { label: "icfb", look: "alert", icon: "win" },
  { label: "Cade...", look: "plain", icon: "win" },
  { label: "Virtu...", look: "plain", icon: "win" },
  { label: "Ban...", look: "alert", icon: "win" },
  { label: "Grap...", look: "current", icon: "win" },
];

const Grip = ({ className }: { className?: string }) => (
  <svg width="16" height="52" viewBox="0 0 16 52" className={className}><path d="M8 0v52" stroke="#c5bcad" strokeWidth="14" strokeDasharray="3 4" /></svg>
);

function Panel() {
  return (
    <div className="flex h-[61px] shrink-0 items-center border-t-2 border-white bg-[#edeae3] pl-[21px] font-['DejaVu_Sans',sans-serif] text-[37px] leading-[48px] text-[#222]">
      <svg width="56" height="48" viewBox="0 0 56 48">
        <ellipse cx="28" cy="24" rx="27" ry="23" fill="#111" />
        <path d="M6 30q20 12 43 2l-3 8q-8 8-20 8T8 42z" fill="#fff" />
        <path d="M7 22q4-5 11-4l4-9q5-5 11 0 10-3 11 5l1 10q6 4 4 8-11 7-27 2Q9 29 7 22z" fill="#c8171e" />
        <path d="M17 22q12 8 26 4" stroke="#111" strokeWidth="3" fill="none" />
      </svg>
      <nav className="ml-[16px] flex gap-[44px]">
        <button>Applications</button>
        <button>Places</button>
        <button>System</button>
      </nav>
      <svg width="60" height="48" viewBox="0 0 60 48" className="ml-[28px]">
        <ellipse cx="30" cy="21" rx="24" ry="20" fill="#2b6fc4" />
        <path d="M16 10q14-12 26-2 2 10-8 12-16 2-18-10zM20 28q12-4 16 4l-6 9q-12-2-10-13z" fill="#8fd6a0" />
        <path d="M3 10q26 22 54 6M5 16q26 18 50 6" fill="none" stroke="#6b7584" strokeWidth="4" />
        <ellipse cx="43" cy="34" rx="11" ry="12" fill="#f1f3f8" stroke="#666f80" strokeWidth="2" transform="rotate(-25 43 34)" />
      </svg>
      <button aria-label="Network" className="ml-[9px] flex h-[52px] w-[64px] items-center justify-center rounded-md border-2 border-[#a2988a] bg-[#efebe5]">
        <svg width="48" height="42" viewBox="0 0 48 42">
          <path d="M4 18l20-14 20 8-16 18z" fill="#5d6b60" stroke="#333" strokeWidth="2" />
          <path d="M20 12l8-5 12 5-9 9z" fill="#3a86d8" />
          <path d="M24 13l5-3 6 3-4 4z" fill="#6cc66c" />
          <path d="M2 22l14-4 6 8-12 6zM30 26l12-4 4 8-12 5z" fill="#b98a3a" stroke="#5d4720" strokeWidth="2" />
          <path d="M8 33l18-6 6 7-16 7z" fill="#d6d6d6" stroke="#555" strokeWidth="2" />
        </svg>
      </button>
      <Grip className="ml-[12px]" />
      <div className="ml-[9px] flex gap-[8px]">
        {tasks.map((t) => (
          <button
            key={t.label}
            className={clsx(
              "flex h-[54px] w-[245px] items-center rounded-lg border-2 pl-[20px]",
              t.look === "plain" && "border-[#a2988a] bg-linear-to-b from-[#fbfaf8] to-[#e5e0d8]",
              t.look === "alert" && "border-[#6f86a0] bg-linear-to-b from-[#c3d7eb] to-[#a3bdd6] font-bold text-black",
              t.look === "current" && "border-[#a2988a] bg-[#dcd3c8]",
            )}
          >
            {t.icon === "term" ? (
              <svg width="44" height="32" viewBox="0 0 44 32"><rect x="1" y="1" width="42" height="30" rx="4" fill="#b9b9b4" stroke="#85857f" strokeWidth="2" /><path d="M8 7h28v16H8z" fill="#cfd0cc" stroke="#85857f" strokeWidth="2" /></svg>
            ) : (
              <svg width="42" height="32" viewBox="0 0 42 32"><path d="M2 2h38v28H2z" fill="#eee" stroke="#333" strokeWidth="3" /><path d="M3 3h36v5H3z" fill="#35557d" /></svg>
            )}
            <span className="ml-[20px]">{t.label}</span>
          </button>
        ))}
      </div>
      <Grip className="ml-[14px]" />
      <span className="ml-auto">2:10 AM</span>
      <svg width="64" height="48" viewBox="0 0 64 48" className="ml-[31px]">
        <path d="M2 20Q10 10 22 7l14-5q4 22 0 44l-14-8Q8 34 2 28z" fill="#8a8a8a" stroke="#444" strokeWidth="2" />
        <path d="M12 18q6-4 14-6v24q-8-4-14-8z" fill="#ddd" />
        <path d="M41 14q7 10 0 20M47 8q11 16 0 32M54 2q14 22 0 44" fill="none" stroke="#3a6aa8" strokeWidth="4" />
      </svg>
      <div className="ml-[12px] flex gap-[2px] pr-[6px]">
        <svg width="78" height="50" viewBox="0 0 78 50">
          <path d="M0 0h78v50H0z" fill="#35689c" />
          <path d="M0 3h78v44H0z" fill="#fff" />
          <path d="M3 5h39v15H3zM45 5h27v13H45zM5 23h18v20H5zM27 20h6v24h-6z" fill="#5398d8" />
          <path d="M46 11h14v7" fill="none" stroke="#000" strokeWidth="3" />
          <path d="M36 21h38v23H36z" fill="#93c5f5" />
        </svg>
        {range(3).map((i) => (
          <i key={i} className="h-[50px] w-[78px] bg-[#b0a694]" />
        ))}
      </div>
    </div>
  );
}

export default function App() {
  return (
    <div className={clsx(UI, "flex min-h-screen flex-col bg-[#e3e4e6]")}>
      <TitleBar />
      <MenuBar />
      <main className="flex flex-1">
        <Library />
        <div className="flex min-w-0 flex-1 flex-col border-b border-l border-[#5c5c5c]">
          <Tabs />
          <div className="relative flex-1 overflow-hidden bg-linear-to-tr from-[#2e0000] via-[#450000] to-[#b00000]">
            <LogWindow />
            <BehindWindow />
            <TestbenchWindow />
            <SchematicWindow />
            <AdeWindow />
            <DirectPlotForm />
            <GraphWindow />
          </div>
          <Panel />
        </div>
      </main>
      <StatusBar />
    </div>
  );
}
